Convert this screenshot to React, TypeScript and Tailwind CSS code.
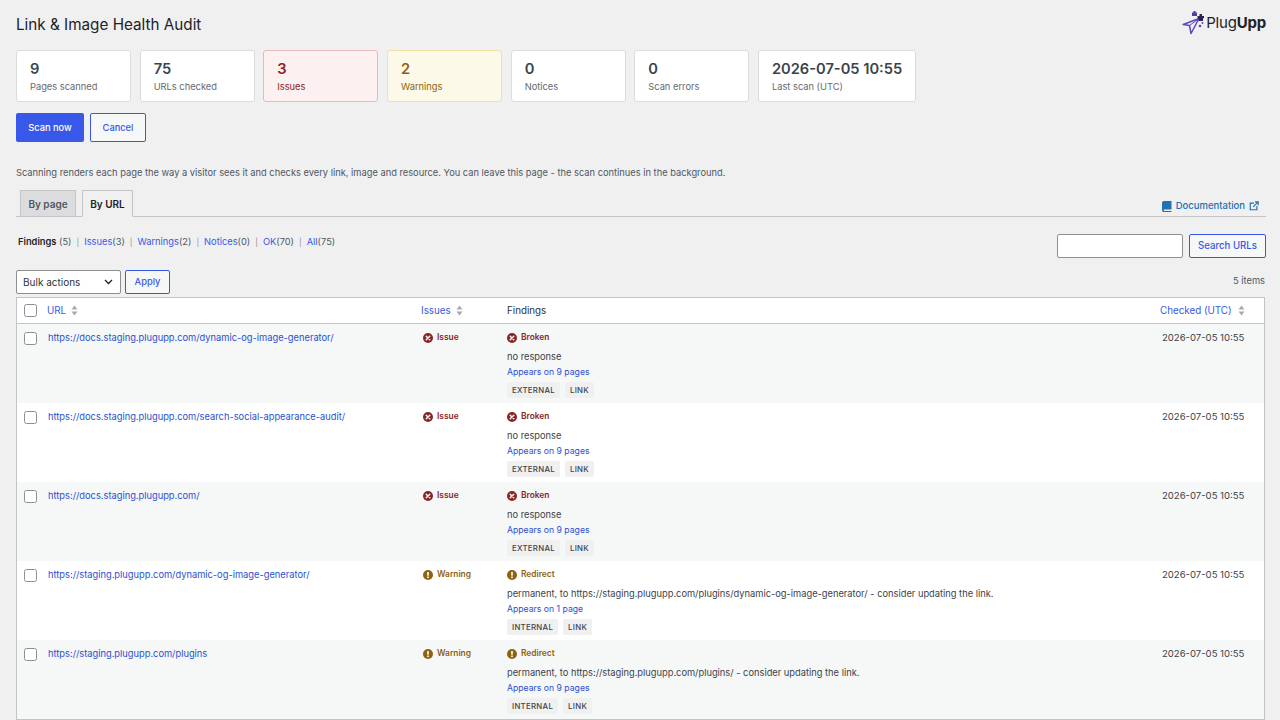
import React from "react";

const stats = [
  { v: "9", l: "Pages scanned", c: "border-[#dcdcde] bg-white", vc: "text-[#3c434a]", lc: "text-[#646970]", w: "w-[115px]" },
  { v: "75", l: "URLs checked", c: "border-[#dcdcde] bg-white", vc: "text-[#3c434a]", lc: "text-[#646970]", w: "w-[115px]" },
  { v: "3", l: "Issues", c: "border-[#eab8bc] bg-[#fcf0f1]", vc: "text-[#8a2424]", lc: "text-[#8a2424]", w: "w-[115px]" },
  { v: "2", l: "Warnings", c: "border-[#f2dfa8] bg-[#fcf9e8]", vc: "text-[#8f6210]", lc: "text-[#8f6210]", w: "w-[115px]" },
  { v: "0", l: "Notices", c: "border-[#dcdcde] bg-white", vc: "text-[#3c434a]", lc: "text-[#646970]", w: "w-[115px]" },
  { v: "0", l: "Scan errors", c: "border-[#dcdcde] bg-white", vc: "text-[#3c434a]", lc: "text-[#646970]", w: "w-[115px]" },
  { v: "2026-07-05 10:55", l: "Last scan (UTC)", c: "border-[#dcdcde] bg-white", vc: "text-[#3c434a]", lc: "text-[#646970]", w: "w-[158px]" },
];

const rows = [
  { url: "https://docs.staging.plugupp.com/dynamic-og-image-generator/", t: "e", detail: "no response", pages: "Appears on 9 pages", scope: "EXTERNAL" },
  { url: "https://docs.staging.plugupp.com/search-social-appearance-audit/", t: "e", detail: "no response", pages: "Appears on 9 pages", scope: "EXTERNAL" },
  { url: "https://docs.staging.plugupp.com/", t: "e", detail: "no response", pages: "Appears on 9 pages", scope: "EXTERNAL" },
  { url: "https://staging.plugupp.com/dynamic-og-image-generator/", t: "w", detail: "permanent, to https://staging.plugupp.com/plugins/dynamic-og-image-generator/ - consider updating the link.", pages: "Appears on 1 page", scope: "INTERNAL" },
  { url: "https://staging.plugupp.com/plugins", t: "w", detail: "permanent, to https://staging.plugupp.com/plugins/ - consider updating the link.", pages: "Appears on 9 pages", scope: "INTERNAL" },
];

const filters = [
  { n: "Issues", c: "(3)" },
  { n: "Warnings", c: "(2)" },
  { n: "Notices", c: "(0)" },
  { n: "OK", c: "(70)" },
  { n: "All", c: "(75)" },
];

function ErrIcon() {
  return (
    <svg width="10" height="10" viewBox="0 0 10 10" className="shrink-0">
      <circle cx="5" cy="5" r="5" fill="#8a2424" />
      <path d="M3.2 3.2 6.8 6.8M6.8 3.2 3.2 6.8" stroke="#fff" strokeWidth="1.4" strokeLinecap="round" />
    </svg>
  );
}
function WarnIcon() {
  return (
    <svg width="10" height="10" viewBox="0 0 10 10" className="shrink-0">
      <circle cx="5" cy="5" r="5" fill="#8f6210" />
      <rect x="4.2" y="2" width="1.6" height="3.7" fill="#fff" />
      <rect x="4.2" y="6.5" width="1.6" height="1.6" fill="#fff" />
    </svg>
  );
}
function Sort() {
  return (
    <svg width="7" height="11" viewBox="0 0 7 11" className="shrink-0">
      <path d="M3.5 0.5 6.5 4.5H0.5Z" fill="#a7aaad" />
      <path d="M3.5 10.5 0.5 6.5H6.5Z" fill="#a7aaad" />
    </svg>
  );
}
function Check() {
  return <span className="block w-[13px] h-[13px] box-border border-[1.4px] border-[#8c8f94] rounded-[2.5px] bg-white shrink-0" />;
}
function Logo() {
  return (
    <div className="flex items-center">
      <svg width="24" height="25" viewBox="0 0 24 25" className="shrink-0">
        <path d="M1.2 14.5 17 8.5 9 23.5 7.5 15.5Z" fill="none" stroke="#5b45c9" strokeWidth="1.5" strokeLinejoin="round" />
        <path d="M7.5 15.5 17 8.5" stroke="#5b45c9" strokeWidth="1" />
        <path d="M10 2.5h1.5V1h2v1.5H15v3.5h-5Z" fill="#4a3fa8" />
        <path d="M15.5 6h2V4h2.5v2h2v2.2h-1V11h-4.5V8.2h-1Z" fill="#2a2550" />
        <circle cx="18" cy="16" r="1.3" fill="#5b45c9" />
        <circle cx="20.5" cy="13" r="0.9" fill="#4a3fa8" />
      </svg>
      <span className="text-[15px] leading-none tracking-[-0.2px] text-[#1d2327]">Plug<span className="font-bold">Upp</span></span>
    </div>
  );
}

export default function App() {
  return (
    <div className="h-[720px] w-[1280px] overflow-hidden bg-[#f0f0f1] text-[#3c434a] pl-4 pr-[14px] text-[9.3px] leading-[14px]" style={{ fontFamily: "Inter, sans-serif" }}>
      <div className="flex items-start justify-between h-[50px]">
        <h1 className="text-[15.25px] leading-[20px] font-normal text-[#1d2327] mt-[15px]">Link &amp; Image Health Audit</h1>
        <div className="mt-[10px]"><Logo /></div>
      </div>

      <div className="flex gap-[8.67px]">
        {stats.map((s, i) => (
          <div key={i} className={"h-[52px] box-border border rounded-[3px] pl-[13px] pt-[9px] " + s.c + " " + s.w}>
            <div className={"text-[14.65px] leading-[19px] font-semibold " + s.vc}>{s.v}</div>
            <div className={"mt-[1px] text-[9.3px] leading-[14px] " + s.lc}>{s.l}</div>
          </div>
        ))}
      </div>

      <div className="flex gap-[6px] mt-[11px]">
        <button className="w-[68px] h-[29px] rounded-[2px] bg-[#3858e9] text-white text-[9.3px] font-medium">Scan now</button>
        <button className="w-[56px] h-[29px] box-border rounded-[2px] border border-[#3858e9] bg-[#f6f7f7] text-[#3858e9] text-[9.3px] font-medium">Cancel</button>
      </div>

      <p className="mt-[24px] text-[9.3px] leading-[14px] text-[#50575e]">
        Scanning renders each page the way a visitor sees it and checks every link, image and resource. You can leave this page - the scan continues in the background.
      </p>

      <div className="mt-[10px] flex items-end justify-between border-b border-[#c3c4c7] h-[27px] pl-[4px]">
        <div className="flex gap-[6px] -mb-px">
          <div className="w-[56px] h-[27px] box-border border border-[#c3c4c7] bg-[#dcdcde] text-[#50575e] text-[10px] font-semibold flex items-center justify-center">By page</div>
          <div className="w-[51px] h-[27px] box-border border border-[#c3c4c7] border-b-[#f0f0f1] bg-[#f0f0f1] text-[#1d2327] text-[10px] font-semibold flex items-center justify-center">By URL</div>
        </div>
        <div className="flex items-center pb-[4px] pr-[7px] text-[#2271b1] text-[9.5px] font-medium leading-[12px]">
          <svg width="10" height="11" viewBox="0 0 10 11" className="shrink-0">
            <path d="M2 0H9.5V8.6H2.2C1.4 8.6 1.4 9.9 2.2 9.9H9.5V11H2C.9 11 0 10.2 0 9.2V2C0 .9.9 0 2 0Z" fill="#2271b1" />
          </svg>
          <span className="ml-[4px]">Documentation</span>
          <svg width="10" height="10" viewBox="0 0 24 24" fill="none" stroke="#2271b1" strokeWidth="2.8" className="shrink-0 ml-[4px]">
            <path d="M12 5H3v16h16v-9M14 2h8v8M22 2 10 14" />
          </svg>
        </div>
      </div>

      <div className="flex items-start justify-between mt-[17px] h-[36px]">
        <div className="flex items-center pl-[2px] pt-[1px] text-[#50575e] whitespace-pre">
          <span className="text-[#1d2327] font-semibold">Findings</span> (5)
          {filters.map((f) => (
            <React.Fragment key={f.n}>
              <span className="text-[#8c8f94] mx-[5px] text-[8px]">|</span>
              <a className="text-[#3858e9]">{f.n}</a> {f.c}
            </React.Fragment>
          ))}
        </div>
        <div className="flex gap-[6px]">
          <input className="w-[126px] h-[24px] box-border bg-white border border-[#8c8f94] rounded-[2px]" />
          <button className="w-[77px] h-[24px] box-border border border-[#3858e9] bg-[#f6f7f7] rounded-[2px] text-[#3858e9] text-[9.65px] font-medium">Search URLs</button>
        </div>
      </div>

      <div className="flex items-center justify-between h-[24px] pr-[1px]">
        <div className="flex gap-[4px]">
          <div className="w-[105px] h-[24px] box-border bg-white border border-[#8c8f94] rounded-[2px] flex items-center justify-between pl-[6px] pr-[7px] text-[10px] text-[#2c3338]">
            Bulk actions
            <svg width="9" height="6" viewBox="0 0 9 6" fill="none" stroke="#1d2327" strokeWidth="1.3"><path d="M1 1l3.5 3.5L8 1" /></svg>
          </div>
          <button className="w-[45px] h-[24px] box-border border border-[#3858e9] bg-[#f6f7f7] rounded-[2px] text-[#3858e9] text-[9.3px] font-medium">Apply</button>
        </div>
        <span className="text-[#50575e] -translate-y-px">5 items</span>
      </div>

      <div className="mt-[3px] border border-[#c3c4c7] w-[1249px] box-border">
        <div className="flex items-center h-[26px] bg-white border-b border-[#c3c4c7] text-[#3858e9] text-[9.8px]">
          <div className="w-[30px] pl-[7px]"><Check /></div>
          <div className="w-[374px] flex items-center gap-[5px]">URL <Sort /></div>
          <div className="w-[86px] flex items-center gap-[5px]">Issues <Sort /></div>
          <div className="flex-1 text-[#2c3338]">Findings</div>
          <div className="w-[104px] flex items-center gap-[6px]">Checked (UTC) <Sort /></div>
        </div>
        {rows.map((r, i) => (
          <div key={i} className={"flex h-[79px] box-border pt-[7px] " + (i % 2 === 0 ? "bg-[#f6f7f7]" : "bg-white")}>
            <div className="w-[30px] pl-[7px] pt-[1px]"><Check /></div>
            <div className="w-[376px] pl-[1px] text-[#2b50d0] leading-[13px]">{r.url}</div>
            <div className={"w-[84px] flex items-start gap-[4px] font-semibold text-[8.4px] leading-[13px] " + (r.t === "e" ? "text-[#8a2424]" : "text-[#8f6210]")}>
              <span className="mt-[1.5px]">{r.t === "e" ? <ErrIcon /> : <WarnIcon />}</span>
              <span>{r.t === "e" ? "Issue" : "Warning"}</span>
            </div>
            <div className="flex-1">
              <div className={"flex items-center gap-[4px] font-semibold text-[8.4px] leading-[13px] " + (r.t === "e" ? "text-[#8a2424]" : "text-[#8f6210]")}>
                {r.t === "e" ? <ErrIcon /> : <WarnIcon />}
                <span>{r.t === "e" ? "Broken" : "Redirect"}</span>
              </div>
              <div className="mt-[6px] text-[#3c434a] leading-[13px]">{r.detail}</div>
              <div className="mt-[3px] text-[#2b50d0] text-[8.66px] leading-[13px]">{r.pages}</div>
              <div className="mt-[3px] flex gap-[5px]">
                <span className="h-[16px] px-[5px] bg-[#f0f0f1] rounded-[2px] text-[#3c434a] font-medium text-[7.8px] leading-[16px] tracking-[0.3px]">{r.scope}</span>
                <span className="h-[16px] px-[5px] bg-[#f0f0f1] rounded-[2px] text-[#3c434a] font-medium text-[7.8px] leading-[16px] tracking-[0.3px]">LINK</span>
              </div>
            </div>
            <div className="w-[104px] pl-[2px] text-[#3c434a] text-[9.55px] leading-[13px]">2026-07-05 10:55</div>
          </div>
        ))}
      </div>
    </div>
  );
}
